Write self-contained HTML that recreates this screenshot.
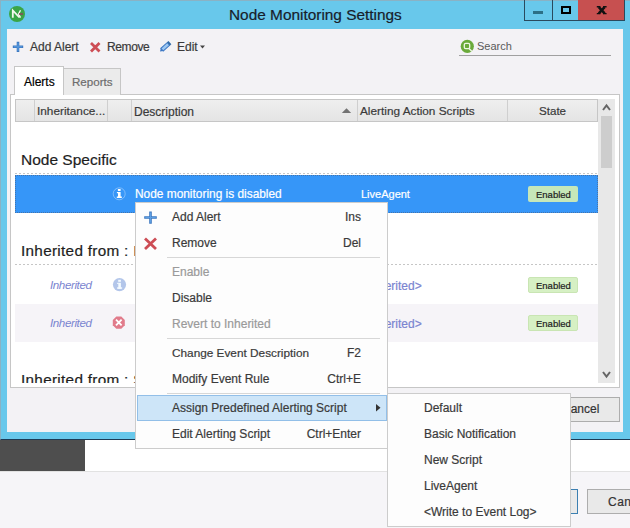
<!DOCTYPE html>
<html><head><meta charset="utf-8">
<style>
*{margin:0;padding:0;box-sizing:border-box}
html,body{width:630px;height:528px;overflow:hidden;background:#f6f5f8;font-family:"Liberation Sans",sans-serif;position:relative}
.a{position:absolute}
.t{position:absolute;white-space:nowrap;line-height:12px;font-size:12px;color:#3a3a3a;-webkit-text-stroke:0.2px currentColor}
.r{text-align:right}
.dash{position:absolute;height:1px;background:repeating-linear-gradient(90deg,#c6c6c6 0 2px,transparent 2px 4px)}
</style></head><body>

<!-- background app below dialog -->
<div class="a" style="left:0;top:440px;width:85px;height:31px;background:#4e4e4e"></div>
<div class="a" style="left:85px;top:440px;width:545px;height:31px;background:#ffffff"></div>
<div class="a" style="left:0;top:471px;width:630px;height:1px;background:#e2e2e2"></div>
<div class="a" style="left:540px;top:489px;width:38px;height:25px;background:#e9e9e9;border:1px solid #3c7fb1"></div>
<div class="a" style="left:587px;top:489px;width:60px;height:25px;background:#e9e9e9;border:1px solid #adadad"></div>
<div class="t" style="left:608px;top:496px;color:#333;letter-spacing:0.5px">Cancel</div>

<!-- dialog frame -->
<div class="a" style="left:0;top:0;width:630px;height:440px;background:#68c8eb;border-top:1px solid #8ab2c4;border-left:1px solid #8ab2c4;border-bottom:1px solid #1d3b55"></div>
<div class="a" style="left:7px;top:29px;width:616px;height:403px;background:#f3f2f5"></div>

<!-- title bar -->
<div class="t" style="left:229px;top:7px;font-size:15.4px;line-height:15px;color:#17202a">Node Monitoring Settings</div>
<div class="a" style="left:524px;top:0;width:29px;height:21px;border:1px solid #2a4a5e;border-top:none"></div>
<div class="a" style="left:552px;top:0;width:27px;height:21px;border:1px solid #2a4a5e;border-top:none;border-left:none"></div>
<div class="a" style="left:578px;top:0;width:47px;height:21px;background:#c75050;border:1px solid #2a4a5e;border-top:none;border-left:none"></div>
<div class="a" style="left:533px;top:11px;width:10px;height:3px;background:#2c6f86"></div>
<div class="a" style="left:561px;top:6px;width:10px;height:8px;border:2px solid #000"></div>

<!-- toolbar -->
<div class="t" style="left:30px;top:41px">Add Alert</div>
<div class="t" style="left:107px;top:41px;letter-spacing:-0.4px">Remove</div>
<div class="t" style="left:177px;top:41px">Edit</div>
<div class="t" style="left:477px;top:40px;color:#5a5a5a;font-size:11px;-webkit-text-stroke:0">Search</div>
<div class="a" style="left:459px;top:55px;width:152px;height:1px;background:#a0a0a0"></div>

<!-- tabs -->
<div class="a" style="left:10px;top:94px;width:610px;height:294px;background:#fff;border:1px solid #c6c6c6"></div>
<div class="a" style="left:63px;top:68px;width:58px;height:27px;background:#ebebeb;border:1px solid #c6c6c6;border-bottom:none"></div>
<div class="a" style="left:14px;top:66px;width:50px;height:29px;background:#fff;border:1px solid #c6c6c6;border-bottom:none"></div>
<div class="a" style="left:15px;top:94px;width:48px;height:2px;background:#fff"></div>
<div class="t" style="left:24px;top:76px;color:#000">Alerts</div>
<div class="t" style="left:72px;top:76px;color:#6d6d6d;font-size:11.6px">Reports</div>

<!-- header -->
<div class="a" style="left:15px;top:99px;width:583px;height:23px;background:linear-gradient(#efefef,#e4e4e4);border:1px solid #c6c6c6"></div>
<div class="a" style="left:34px;top:100px;width:1px;height:21px;background:#cfcfcf"></div>
<div class="a" style="left:107px;top:100px;width:1px;height:21px;background:#cfcfcf"></div>
<div class="a" style="left:131px;top:100px;width:1px;height:21px;background:#cfcfcf"></div>
<div class="a" style="left:357px;top:100px;width:1px;height:21px;background:#cfcfcf"></div>
<div class="a" style="left:507px;top:100px;width:1px;height:21px;background:#cfcfcf"></div>
<div class="t" style="left:37px;top:105px;font-size:11.8px">Inheritance...</div>
<div class="t" style="left:134px;top:106px">Description</div>
<div class="t" style="left:360px;top:105px;font-size:11.8px">Alerting Action Scripts</div>
<div class="t" style="left:539px;top:105px;font-size:11.6px">State</div>

<!-- scrollbar -->
<div class="a" style="left:598px;top:99px;width:17px;height:284px;background:#e8e8e8"></div>
<div class="a" style="left:601px;top:116px;width:11px;height:52px;background:#cdcdcd"></div>

<!-- rows -->
<div class="t" style="left:21px;top:152px;font-size:15.5px;line-height:15px;color:#1e1e1e">Node Specific</div>
<div class="dash" style="left:15px;top:173px;width:583px"></div>
<div class="a" style="left:15px;top:175px;width:583px;height:38px;background:#3696f8;border:1px dotted #4674aa"></div>
<div class="t" style="left:135px;top:188px;color:#fff;font-size:11.9px">Node monitoring is disabled</div>
<div class="t" style="left:361px;top:188px;color:#fff;font-size:11px">LiveAgent</div>
<div class="a" style="left:528px;top:186px;width:50px;height:16px;background:#c6e7b9;border-radius:2px"></div>
<div class="t" style="left:536px;top:190px;font-size:9.5px;line-height:9px;color:#222">Enabled</div>

<div class="t" style="left:21px;top:243px;font-size:15.3px;letter-spacing:0.3px;line-height:15px;color:#1e1e1e">Inherited from : I</div>
<div class="dash" style="left:15px;top:264px;width:583px"></div>
<div class="t" style="left:50px;top:279px;font-style:italic;font-size:11.6px;letter-spacing:-0.4px;color:#7a84d0;-webkit-text-stroke:0">Inherited</div>
<div class="t" style="left:361px;top:280px;color:#7a84d0">&lt;Inherited&gt;</div>
<div class="a" style="left:528px;top:277px;width:50px;height:16px;background:#d6f0c4;border:1px solid #c9e5b3;border-radius:2px"></div>
<div class="t" style="left:536px;top:281px;font-size:9.5px;line-height:9px;color:#222">Enabled</div>

<div class="a" style="left:15px;top:304px;width:583px;height:38px;background:#f6f4f8"></div>
<div class="t" style="left:50px;top:317px;font-style:italic;font-size:11.6px;letter-spacing:-0.4px;color:#7a84d0;-webkit-text-stroke:0">Inherited</div>
<div class="t" style="left:361px;top:318px;color:#7a84d0">&lt;Inherited&gt;</div>
<div class="a" style="left:528px;top:315px;width:50px;height:16px;background:#d6f0c4;border:1px solid #c9e5b3;border-radius:2px"></div>
<div class="t" style="left:536px;top:319px;font-size:9.5px;line-height:9px;color:#222">Enabled</div>

<div class="a" style="left:11px;top:370px;width:587px;height:13px;overflow:hidden">
 <div class="t" style="left:10px;top:2px;font-size:15.3px;letter-spacing:0.3px;line-height:15px;color:#1e1e1e">Inherited from : Server</div>
</div>

<!-- dialog cancel -->
<div class="a" style="left:540px;top:397px;width:80px;height:25px;background:#e9e9e9;border:1px solid #adadad"></div>
<div class="t" style="left:562px;top:403px;color:#333">Cancel</div>

<!-- context menu -->
<div class="a" style="left:135px;top:202px;width:253px;height:247px;background:#fdfdfd;border:1px solid #cccccc"></div>
<div class="a" style="left:137px;top:395px;width:250px;height:26px;background:#cde5f8;border:1px solid #92bfe8"></div>
<div class="t" style="left:172px;top:211px">Add Alert</div>
<div class="t r" style="left:300px;width:61px;top:211px">Ins</div>
<div class="t" style="left:172px;top:237px">Remove</div>
<div class="t r" style="left:300px;width:61px;top:237px">Del</div>
<div class="a" style="left:167px;top:257px;width:213px;height:1px;background:#d7d7d7"></div>
<div class="t" style="left:172px;top:266px;color:#9a9a9a">Enable</div>
<div class="t" style="left:172px;top:292px">Disable</div>
<div class="t" style="left:172px;top:318px;color:#9a9a9a">Revert to Inherited</div>
<div class="a" style="left:167px;top:338px;width:213px;height:1px;background:#d7d7d7"></div>
<div class="t" style="left:172px;top:347px;font-size:11.8px">Change Event Description</div>
<div class="t r" style="left:300px;width:61px;top:347px">F2</div>
<div class="t" style="left:172px;top:373px">Modify Event Rule</div>
<div class="t r" style="left:300px;width:61px;top:373px">Ctrl+E</div>
<div class="a" style="left:167px;top:393px;width:213px;height:1px;background:#d7d7d7"></div>
<div class="t" style="left:172px;top:402px">Assign Predefined Alerting Script</div>
<div class="t" style="left:172px;top:428px">Edit Alerting Script</div>
<div class="t r" style="left:280px;width:81px;top:428px">Ctrl+Enter</div>

<!-- submenu -->
<div class="a" style="left:387px;top:393px;width:184px;height:134px;background:#fdfdfd;border:1px solid #cccccc"></div>
<div class="t" style="left:424px;top:402px">Default</div>
<div class="t" style="left:424px;top:428px">Basic Notification</div>
<div class="t" style="left:424px;top:454px">New Script</div>
<div class="t" style="left:424px;top:480px">LiveAgent</div>
<div class="t" style="left:424px;top:506px">&lt;Write to Event Log&gt;</div>

<!-- icons overlay -->
<svg class="a" style="left:0;top:0" width="630" height="528" viewBox="0 0 630 528">
 <!-- app icon -->
 <circle cx="17" cy="14" r="8" fill="#3aa547"/>
 <path d="M12.8 17.8V10.4L19.5 17.5" fill="none" stroke="#f4f8ee" stroke-width="1.8"/>
 <path d="M20.5 10.2L18.6 14L20.5 17.6" fill="none" stroke="#f4f8ee" stroke-width="1.4"/>
 <path d="M19 14H23" stroke="#8a4a5a" stroke-width="1.6"/>
 <!-- close x -->
 <path d="M598.8 7.2L604.6 13.4M604.6 7.2L598.8 13.4" stroke="#111" stroke-width="2.6"/><path d="M596.8 6.8H600.4M603 6.8H606.6M596.8 13.6H600.4M603 13.6H606.6" stroke="#111" stroke-width="1.4"/>
 <!-- toolbar plus -->
 <path d="M18 41.8V52M12.8 46.8H23.2" stroke="#3d78c0" stroke-width="2.6"/><path d="M18 42.8V51M13.8 46.8H22.2" stroke="#5b9ee3" stroke-width="1"/>
 <!-- toolbar x -->
 <path d="M91 43L99.5 51.5M99.5 43L91 51.5" stroke="#cd4d55" stroke-width="2.8"/>
 <!-- pencil -->
 <g transform="rotate(-42 165 47)">
  <rect x="161" y="45.2" width="8.6" height="3.6" fill="#9cc8f2" stroke="#3d78c4" stroke-width="1"/>
  <path d="M158.3 47L161 45.2V48.8Z" fill="#3d78c4"/>
  <rect x="169.6" y="44.8" width="2" height="4.4" fill="#2f6aa8"/>
 </g>
 <!-- edit dropdown arrow -->
 <path d="M200 45.5H205L202.5 48.5Z" fill="#444"/>
 <!-- search icon -->
 <circle cx="467.3" cy="46.3" r="6.6" fill="#6aaa3a"/>
 <rect x="464.3" y="43.3" width="5.4" height="5.4" rx="1.4" fill="none" stroke="#eef6e4" stroke-width="1.3"/>
 <path d="M469 48.5L471.8 51.3" stroke="#eef6e4" stroke-width="1.4"/>
 <!-- sort arrow -->
 <path d="M341.8 113H351.2L346.5 108.3Z" fill="#737373"/>
 <!-- scroll chevrons -->
 <path d="M603 110L606.5 105.5L610 110" fill="none" stroke="#656565" stroke-width="2"/>
 <path d="M603 372L606.5 376.5L610 372" fill="none" stroke="#656565" stroke-width="2"/>
 <!-- info icon selected -->
 <circle cx="119.2" cy="193.8" r="6" fill="none" stroke="rgba(255,255,255,0.35)" stroke-width="1"/>
 <rect x="117.9" y="189" width="2.7" height="2" fill="#fff"/>
 <rect x="118" y="192" width="2.6" height="6" fill="#fff"/><rect x="116.8" y="196.5" width="5" height="1.5" fill="#fff"/><rect x="116.9" y="192" width="1.4" height="1.2" fill="#fff"/>
 <!-- info icon inherited -->
 <circle cx="119.5" cy="284.6" r="6.6" fill="#b3c6ea"/>
 <rect x="118.2" y="279.8" width="2.7" height="2" fill="#f4fbff"/>
 <rect x="118.3" y="282.8" width="2.6" height="6" fill="#f4fbff"/><rect x="117.1" y="287.3" width="5" height="1.5" fill="#f4fbff"/><rect x="117.2" y="282.8" width="1.4" height="1.2" fill="#f4fbff"/>
 <!-- error icon -->
 <path d="M116.3 316.5H121.3L124.8 320V325.3L121.3 328.8H116.3L112.8 325.3V320Z" fill="#e17b8b"/>
 <path d="M116 319.7L121.6 325.4M121.6 319.7L116 325.4" stroke="#fff" stroke-width="1.8"/>
 <!-- menu plus -->
 <path d="M150.5 211.5V223.7M144.2 217.5H156.8" stroke="#3d78c0" stroke-width="2.6"/><path d="M150.5 212.5V222.7M145.2 217.5H155.8" stroke="#5b9ee3" stroke-width="1"/>
 <!-- menu x -->
 <path d="M145 238.5L156 249M156 238.5L145 249" stroke="#cd4d55" stroke-width="2.8"/>
 <!-- submenu arrow -->
 <path d="M376 404V411.6L380.5 407.8Z" fill="#333"/>
</svg>

</body></html>
